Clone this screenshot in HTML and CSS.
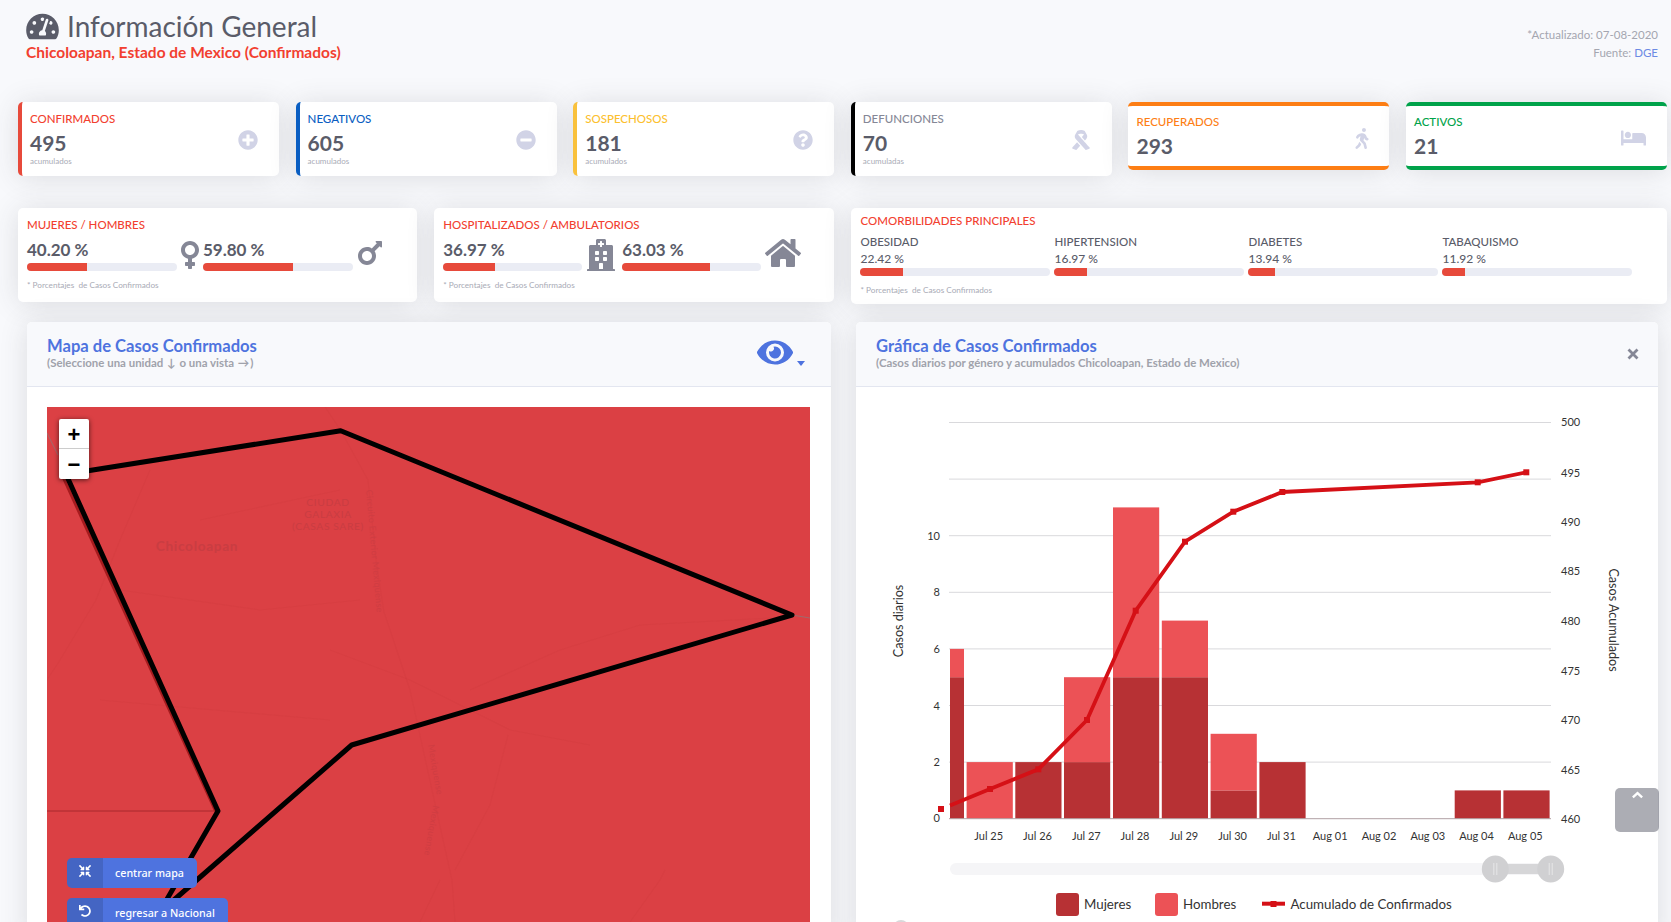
FILE: index.html
```html
<!DOCTYPE html>
<html lang="es">
<head>
<meta charset="utf-8">
<title>Información General</title>
<link rel="stylesheet" href="styles.css">
</head>
<body>
<div class="page">
  <header class="top">
    <div>
      <h1 class="title"><svg class="title-icon" viewBox="0 0 576 512"><path d="M288 32C128.94 32 0 160.94 0 320c0 52.8 14.25 102.26 39.06 144.8 5.61 9.62 16.3 15.2 27.44 15.2h443c11.14 0 21.83-5.58 27.44-15.2C561.75 422.26 576 372.8 576 320c0-159.06-128.94-288-288-288zm0 64c14.71 0 26.58 10.13 30.32 23.65-1.11 2.26-2.64 4.23-3.45 6.67l-9.22 27.67c-5.13 3.49-10.97 6.01-17.64 6.01-17.67 0-32-14.33-32-32S270.33 96 288 96zM96 384c-17.67 0-32-14.33-32-32s14.33-32 32-32 32 14.33 32 32-14.33 32-32 32zm48-160c-17.67 0-32-14.33-32-32s14.33-32 32-32 32 14.33 32 32-14.33 32-32 32zm246.77-72.41l-61.33 184C343.13 347.33 352 364.54 352 384c0 11.72-3.38 22.55-8.88 32H232.88c-5.5-9.45-8.88-20.28-8.88-32 0-33.94 26.5-61.43 59.9-63.59l61.34-184.01c4.17-12.56 17.73-19.45 30.36-15.17 12.57 4.19 19.35 17.79 15.17 30.36zm14.66 57.2l15.52-46.55c3.47-1.29 7.13-2.23 11.05-2.23 17.67 0 32 14.33 32 32s-14.33 32-32 32c-11.38-.01-20.89-6.28-26.57-15.22zM480 384c-17.67 0-32-14.33-32-32s14.33-32 32-32 32 14.33 32 32-14.33 32-32 32z"/></svg>Información General</h1>
      <div class="subtitle">Chicoloapan, Estado de Mexico (Confirmados)</div>
    </div>
    <div class="updated">
      <div>*Actualizado: 07-08-2020</div>
      <div>Fuente: <a class="source">DGE</a></div>
    </div>
  </header>

  <section class="kpis">
    <div class="kpi side c-red">
      <div class="kpi-text"><div class="kpi-label">CONFIRMADOS</div><div class="kpi-num">495</div><div class="kpi-note">acumulados</div></div>
      <svg class="kpi-icon" viewBox="0 0 512 512"><path d="M256 8C119 8 8 119 8 256s111 248 248 248 248-111 248-248S393 8 256 8zm144 276c0 6.6-5.4 12-12 12h-92v92c0 6.6-5.4 12-12 12h-56c-6.6 0-12-5.4-12-12v-92h-92c-6.6 0-12-5.4-12-12v-56c0-6.6 5.4-12 12-12h92v-92c0-6.6 5.4-12 12-12h56c6.6 0 12 5.4 12 12v92h92c6.6 0 12 5.4 12 12v56z"/></svg>
    </div>
    <div class="kpi side c-blue">
      <div class="kpi-text"><div class="kpi-label">NEGATIVOS</div><div class="kpi-num">605</div><div class="kpi-note">acumulados</div></div>
      <svg class="kpi-icon" viewBox="0 0 512 512"><path d="M256 8C119 8 8 119 8 256s111 248 248 248 248-111 248-248S393 8 256 8zM124 296c-6.6 0-12-5.4-12-12v-56c0-6.6 5.4-12 12-12h264c6.6 0 12 5.4 12 12v56c0 6.6-5.4 12-12 12H124z"/></svg>
    </div>
    <div class="kpi side c-yellow">
      <div class="kpi-text"><div class="kpi-label">SOSPECHOSOS</div><div class="kpi-num">181</div><div class="kpi-note">acumulados</div></div>
      <svg class="kpi-icon" viewBox="0 0 512 512"><path d="M504 256c0 136.997-111.043 248-248 248S8 392.997 8 256C8 119.083 119.043 8 256 8s248 111.083 248 248zM262.655 90c-54.497 0-89.255 22.957-116.549 63.758-3.536 5.286-2.353 12.415 2.715 16.258l34.699 26.31c5.205 3.947 12.621 3.008 16.665-2.122 17.864-22.658 30.113-35.797 57.303-35.797 20.429 0 45.698 13.148 45.698 32.958 0 14.976-12.363 22.667-32.534 33.976C247.128 238.528 216 254.941 216 296v4c0 6.627 5.373 12 12 12h56c6.627 0 12-5.373 12-12v-1.333c0-28.462 83.186-29.647 83.186-106.667 0-58.002-60.165-102-116.531-102zM256 338c-25.365 0-46 20.635-46 46 0 25.364 20.635 46 46 46s46-20.636 46-46c0-25.365-20.635-46-46-46z"/></svg>
    </div>
    <div class="kpi side c-black">
      <div class="kpi-text"><div class="kpi-label">DEFUNCIONES</div><div class="kpi-num">70</div><div class="kpi-note">acumuladas</div></div>
      <svg class="kpi-icon" viewBox="0 0 448 512"><path d="M6.1 444.3c-9.6 10.8-7.5 27.6 4.5 35.7l68.8 27.9c9.9 6.7 23.3 5 31.3-3.8l91.8-101.9-79.2-87.9-117.2 130zm435.8 0s-292-324.6-295.4-330.1c15.4-8.4 40.2-17.9 77.5-17.9s62.1 9.5 77.5 17.9c-3.3 5.6-56 64.6-56 64.6l79.1 87.7 34.2-38c28.7-31.9 33.3-78.6 11.4-115.5l-43.7-73.5c-4.3-7.2-9.9-13.3-16.8-18-40.7-27.6-127.4-29.7-171.4 0-6.9 4.7-12.5 10.8-16.8 18l-43.6 73.2c-1.5 2.5-37.1 62.2 11.5 116L337.5 504c8 8.9 21.4 10.5 31.3 3.8l68.8-27.9c11.9-8 14-24.8 4.3-35.6z"/></svg>
    </div>
    <div class="kpi band c-orange">
      <div class="kpi-text"><div class="kpi-label">RECUPERADOS</div><div class="kpi-num">293</div></div>
      <svg class="kpi-icon walk" viewBox="0 0 320 512"><path d="M208 96c26.5 0 48-21.5 48-48S234.5 0 208 0s-48 21.5-48 48 21.5 48 48 48zm94.5 149.1l-23.3-11.8-9.7-29.4c-14.7-44.6-55.7-75.8-102.2-75.9-36-.1-55.9 10.1-93.3 25.2-21.6 8.7-39.3 25.2-49.7 46.2L17.6 213c-7.8 15.8-1.5 35 14.2 42.9 15.6 7.9 34.6 1.5 42.5-14.3L81 228c3.5-7 9.3-12.5 16.5-15.4l26.8-10.8-15.2 60.7c-5.2 20.8.4 42.9 14.9 58.8l59.9 65.4c7.2 7.9 12.3 17.4 14.9 27.7l18.3 73.3c4.3 17.1 21.7 27.6 38.8 23.3 17.1-4.3 27.6-21.7 23.3-38.8l-22.2-89c-2.6-10.3-7.7-19.9-14.9-27.7l-45.5-49.7 17.2-68.7 5.5 16.5c5.3 16.1 16.7 29.4 31.7 37l23.3 11.8c15.6 7.9 34.6 1.5 42.5-14.3 7.7-15.7 1.4-35.1-14.3-43zM73.6 385.8c-3.2 8.1-8 15.4-14.2 21.5l-50 50.1c-12.5 12.5-12.5 32.8 0 45.3s32.7 12.5 45.2 0l59.4-59.4c6.1-6.1 10.9-13.4 14.2-21.5l13.5-33.8c-55.3-60.3-38.7-41.8-47.4-53.7l-20.7 51.5z"/></svg>
    </div>
    <div class="kpi band c-green">
      <div class="kpi-text"><div class="kpi-label">ACTIVOS</div><div class="kpi-num">21</div></div>
      <svg class="kpi-icon bed" viewBox="0 0 640 512"><path d="M176 256c44.11 0 80-35.89 80-80s-35.89-80-80-80-80 35.89-80 80 35.89 80 80 80zm352-128H304c-8.84 0-16 7.16-16 16v144H64V80c0-8.84-7.16-16-16-16H16C7.16 64 0 71.16 0 80v352c0 8.84 7.16 16 16 16h32c8.84 0 16-7.16 16-16v-48h512v48c0 8.84 7.16 16 16 16h32c8.84 0 16-7.16 16-16V240c0-61.86-50.14-112-112-112z"/></svg>
    </div>
  </section>

  <section class="stats">
    <div class="stat-card">
      <div class="stat-title">MUJERES / HOMBRES</div>
      <div class="pair">
        <div class="pair-item"><div class="pct">40.20 %</div><div class="bar"><div class="fill" style="width:40.2%"></div></div></div>
        <svg class="pair-icon venus" viewBox="0 0 288 512"><path d="M288 176c0-79.5-64.5-144-144-144S0 96.5 0 176c0 68.5 47.9 125.9 112 140.4V368H76c-6.6 0-12 5.4-12 12v40c0 6.6 5.4 12 12 12h36v36c0 6.6 5.4 12 12 12h40c6.6 0 12-5.4 12-12v-36h36c6.6 0 12-5.4 12-12v-40c0-6.6-5.4-12-12-12h-36v-51.6c64.1-14.5 112-71.9 112-140.4zm-224 0c0-44.1 35.9-80 80-80s80 35.9 80 80-35.9 80-80 80-80-35.9-80-80z"/></svg>
        <div class="pair-item"><div class="pct">59.80 %</div><div class="bar"><div class="fill" style="width:59.8%"></div></div></div>
        <svg class="pair-icon mars" viewBox="0 0 384 512"><path d="M372 64h-79c-10.7 0-16 12.9-8.5 20.5l16.9 16.9-80.7 80.7c-22.2-14-48.5-22.1-76.7-22.1C64.5 160 0 224.5 0 304s64.5 144 144 144 144-64.5 144-144c0-28.2-8.1-54.5-22.1-76.7l80.7-80.7 16.9 16.9c7.6 7.6 20.5 2.2 20.5-8.5V76c0-6.6-5.4-12-12-12zM144 384c-44.1 0-80-35.9-80-80s35.9-80 80-80 80 35.9 80 80-35.9 80-80 80z"/></svg>
      </div>
      <div class="foot">* Porcentajes&nbsp; de Casos Confirmados</div>
    </div>
    <div class="stat-card">
      <div class="stat-title">HOSPITALIZADOS / AMBULATORIOS</div>
      <div class="pair pair-b">
        <div class="pair-item"><div class="pct">36.97 %</div><div class="bar"><div class="fill" style="width:36.97%"></div></div></div>
        <svg class="pair-icon hosp" viewBox="0 0 448 512"><path d="M448 492v20H0v-20c0-6.627 5.373-12 12-12h20V120c0-13.255 10.745-24 24-24h88V24c0-13.255 10.745-24 24-24h112c13.255 0 24 10.745 24 24v72h88c13.255 0 24 10.745 24 24v360h20c6.627 0 12 5.373 12 12zM308 192h-40c-6.627 0-12 5.373-12 12v40c0 6.627 5.373 12 12 12h40c6.627 0 12-5.373 12-12v-40c0-6.627-5.373-12-12-12zm-168 64h40c6.627 0 12-5.373 12-12v-40c0-6.627-5.373-12-12-12h-40c-6.627 0-12 5.373-12 12v40c0 6.627 5.373 12 12 12zm104 128h-40c-6.627 0-12 5.373-12 12v84h64v-84c0-6.627-5.373-12-12-12zm64-96h-40c-6.627 0-12 5.373-12 12v40c0 6.627 5.373 12 12 12h40c6.627 0 12-5.373 12-12v-40c0-6.627-5.373-12-12-12zm-116 12c0-6.627-5.373-12-12-12h-40c-6.627 0-12 5.373-12 12v40c0 6.627 5.373 12 12 12h40c6.627 0 12-5.373 12-12v-40zM182 96h26v26a6 6 0 0 0 6 6h20a6 6 0 0 0 6-6V96h26a6 6 0 0 0 6-6V70a6 6 0 0 0-6-6h-26V38a6 6 0 0 0-6-6h-20a6 6 0 0 0-6 6v26h-26a6 6 0 0 0-6 6v20a6 6 0 0 0 6 6z"/></svg>
        <div class="pair-item"><div class="pct">63.03 %</div><div class="bar"><div class="fill" style="width:63.03%"></div></div></div>
        <svg class="pair-icon house" viewBox="0 0 576 512"><path d="M280.37 148.26L96 300.11V464a16 16 0 0 0 16 16l112.06-.29a16 16 0 0 0 15.92-16V368a16 16 0 0 1 16-16h64a16 16 0 0 1 16 16v95.64a16 16 0 0 0 16 16.05L464 480a16 16 0 0 0 16-16V300L295.67 148.26a12.19 12.19 0 0 0-15.3 0zM571.6 251.47L488 182.56V44.05a12 12 0 0 0-12-12h-56a12 12 0 0 0-12 12v72.61L318.47 43a48 48 0 0 0-61 0L4.34 251.47a12 12 0 0 0-1.6 16.9l25.5 31A12 12 0 0 0 45.15 301l235.22-193.74a12.19 12.19 0 0 1 15.3 0L530.9 301a12 12 0 0 0 16.9-1.6l25.5-31a12 12 0 0 0-1.7-16.93z"/></svg>
      </div>
      <div class="foot">* Porcentajes&nbsp; de Casos Confirmados</div>
    </div>
    <div class="stat-card como">
      <div class="stat-title">COMORBILIDADES PRINCIPALES</div>
      <div class="como-grid">
        <div><div class="como-name">OBESIDAD</div><div class="como-val">22.42 %</div><div class="bar"><div class="fill" style="width:22.42%"></div></div></div>
        <div><div class="como-name">HIPERTENSION</div><div class="como-val">16.97 %</div><div class="bar"><div class="fill" style="width:16.97%"></div></div></div>
        <div><div class="como-name">DIABETES</div><div class="como-val">13.94 %</div><div class="bar"><div class="fill" style="width:13.94%"></div></div></div>
        <div><div class="como-name">TABAQUISMO</div><div class="como-val">11.92 %</div><div class="bar"><div class="fill" style="width:11.92%"></div></div></div>
      </div>
      <div class="foot">* Porcentajes&nbsp; de Casos Confirmados</div>
    </div>
  </section>

  <section class="panels">
    <article class="panel">
      <div class="panel-head">
        <div>
          <div class="panel-title">Mapa de Casos Confirmados</div>
          <div class="panel-sub">(Seleccione una unidad <span class="arrow">↓</span> o una vista <span class="arrow">→</span>)</div>
        </div>
        <div class="eye-wrap">
          <svg class="eye" viewBox="0 0 576 512"><path d="M572.52 241.4C518.29 135.59 410.93 64 288 64S57.68 135.64 3.48 241.41a32.35 32.35 0 0 0 0 29.19C57.71 376.41 165.07 448 288 448s230.32-71.64 284.52-177.41a32.35 32.35 0 0 0 0-29.19zM288 400a144 144 0 1 1 144-144 143.93 143.93 0 0 1-144 144zm0-240a95.31 95.31 0 0 0-25.31 3.79 47.85 47.85 0 0 1-66.9 66.9A95.78 95.78 0 1 0 288 160z"/></svg>
          <span class="caret"></span>
        </div>
      </div>
      <div class="panel-body">
        <div class="map">
          <svg class="map-svg" viewBox="47 407 763 515">
            <rect x="47" y="407" width="763" height="515" fill="#db4044"/>
            <g class="roads">
              <path d="M325 407 L341 431 L368 480 L376 560 L384 612 L410 690 L432 790 L452 880 L455 922"/>
              <path d="M150 470 L120 540 L96 600 L60 660 L47 680"/>
              <path d="M330 650 L410 680 L510 730 L590 745"/>
              <path d="M508 735 L490 805 L455 870"/>
              <path d="M440 880 L420 922 M630 922 L660 880 L665 870"/>
              <path d="M470 690 L560 650 L640 625 L790 617"/>
              <path d="M120 590 L260 610 L360 600 M100 700 L330 720 M200 520 L340 490"/>
            </g>
            <text class="map-town" x="197" y="551" text-anchor="middle">Chicoloapan</text>
            <text class="map-col" x="328" y="505.5" text-anchor="middle">CIUDAD</text>
            <text class="map-col" x="328" y="518" text-anchor="middle">GALAXIA</text>
            <text class="map-col" x="328" y="530" text-anchor="middle">(CASAS SARE)</text>
            <text class="map-road" transform="translate(366 490) rotate(85)">Circuito Exterior Mexiquense</text>
            <text class="map-road" transform="translate(428 745) rotate(80)">Mexiquense</text>
            <text class="map-road" transform="translate(433 805) rotate(100)">Mexiquense</text>
            <path d="M47 811 L218 811" class="thin-line"/>
            <path d="M47 433 L58 455" class="faint-line"/>
            <path d="M792 615 L810 618" class="faint-line"/>
            <path d="M63.5 478 L215.5 811" class="shadow-line"/>
            <path d="M66 474.3 L340.7 430.7 L792 615 L351.7 745 L159 913 L218 811 Z" class="outline"/>
          </svg>
          <div class="zoom">
            <div class="zoom-btn zoom-top">+</div>
            <div class="zoom-btn">−</div>
          </div>
          <div class="map-actions">
            <div class="map-btn">
              <span class="map-btn-ico"><svg viewBox="0 0 512 512"><path d="M200 288H88c-21.4 0-32.1 25.8-17 41l32.9 31-99.2 99.3c-6.2 6.2-6.2 16.4 0 22.6l25.4 25.4c6.2 6.2 16.4 6.2 22.6 0L152 408l31.1 33c15.1 15.1 40.9 4.4 40.9-17V312c0-13.3-10.7-24-24-24zm112-64h112c21.4 0 32.1-25.9 17-41l-33-31 99.3-99.3c6.2-6.2 6.2-16.4 0-22.6L481.9 4.7c-6.2-6.2-16.4-6.2-22.6 0L360 104l-31.1-33C313.8 55.9 288 66.6 288 88v112c0 13.3 10.7 24 24 24zm96 136l33-31.1c15.1-15.1 4.4-40.9-17-40.9H312c-13.3 0-24 10.7-24 24v112c0 21.4 25.9 32.1 41 17l31-32.9 99.3 99.3c6.2 6.2 16.4 6.2 22.6 0l25.4-25.4c6.2-6.2 6.2-16.4 0-22.6L408 360zM183 71.1L152 104 52.7 4.7c-6.2-6.2-16.4-6.2-22.6 0L4.7 30.1c-6.2 6.2-6.2 16.4 0 22.6L104 152l-33 31.1C55.9 198.2 66.6 224 88 224h112c13.3 0 24-10.7 24-24V88c0-21.3-25.9-32-41-16.9z"/></svg></span>
              <span class="map-btn-txt">centrar mapa</span>
            </div>
            <div class="map-btn">
              <span class="map-btn-ico"><svg viewBox="0 0 512 512"><path d="M212.333 224.333H12c-6.627 0-12-5.373-12-12V12C0 5.373 5.373 0 12 0h48c6.627 0 12 5.373 12 12v78.112C117.773 39.279 184.26 7.47 258.175 8.007c136.906.994 246.448 111.623 246.157 248.532C504.041 393.258 393.12 504 256.333 504c-64.089 0-122.496-24.313-166.51-64.215-5.099-4.622-5.334-12.554-.467-17.42l33.967-33.967c4.474-4.474 11.662-4.717 16.401-.525C170.76 415.336 211.58 432 256.333 432c97.268 0 176-78.716 176-176 0-97.267-78.716-176-176-176-58.496 0-110.28 28.476-142.274 72.333h98.274c6.627 0 12 5.373 12 12v48c0 6.627-5.373 12-12 12z"/></svg></span>
              <span class="map-btn-txt">regresar a Nacional</span>
            </div>
          </div>
        </div>
      </div>
    </article>

    <article class="panel">
      <div class="panel-head">
        <div>
          <div class="panel-title">Gráfica de Casos Confirmados</div>
          <div class="panel-sub">(Casos diarios por género y acumulados Chicoloapan, Estado de Mexico)</div>
        </div>
        <svg class="close" viewBox="0 0 12 12"><path d="M1.5 1.5 L10.5 10.5 M10.5 1.5 L1.5 10.5"/></svg>
      </div>
      <svg class="chart" viewBox="856 387 802 535">
        <g class="grid">
          <path d="M949 422.5H1551M949 479.1H1551M949 535.7H1551M949 592.3H1551M949 648.9H1551M949 705.5H1551M949 762.1H1551"/>
        </g>
        <g class="bars-m">
          <rect x="950" y="677.2" width="14" height="141.5"/>
          <rect x="1015.3" y="762.1" width="46.2" height="56.6"/>
          <rect x="1064" y="762.1" width="46.2" height="56.6"/>
          <rect x="1113" y="677.2" width="46.2" height="141.5"/>
          <rect x="1161.8" y="677.2" width="46.2" height="141.5"/>
          <rect x="1210.6" y="790.4" width="46.2" height="28.3"/>
          <rect x="1259.4" y="762.1" width="46.2" height="56.6"/>
          <rect x="1454.7" y="790.4" width="46.2" height="28.3"/>
          <rect x="1503.4" y="790.4" width="46.2" height="28.3"/>
        </g>
        <g class="bars-h">
          <rect x="950" y="648.9" width="14" height="28.3"/>
          <rect x="966.6" y="762.1" width="46.2" height="56.6"/>
          <rect x="1064" y="677.2" width="46.2" height="84.9"/>
          <rect x="1113" y="507.4" width="46.2" height="169.8"/>
          <rect x="1161.8" y="620.6" width="46.2" height="56.6"/>
          <rect x="1210.6" y="733.8" width="46.2" height="56.6"/>
        </g>
        <path class="baseline" d="M949 818.7H1551"/>
        <path class="line" d="M950 805.4L990 789L1038.3 769.3L1087 720L1135.7 610.7L1185 541.7L1233.3 511.7L1282.3 492L1477.7 482.3L1526.3 472.3"/>
        <g class="marks">
          <rect x="938" y="806" width="6" height="6"/>
          <rect x="987" y="786" width="6" height="6"/>
          <rect x="1035.3" y="766.3" width="6" height="6"/>
          <rect x="1084" y="717" width="6" height="6"/>
          <rect x="1132.7" y="607.7" width="6" height="6"/>
          <rect x="1182" y="538.7" width="6" height="6"/>
          <rect x="1230.3" y="508.7" width="6" height="6"/>
          <rect x="1279.3" y="489" width="6" height="6"/>
          <rect x="1474.7" y="479.3" width="6" height="6"/>
          <rect x="1523.3" y="469.3" width="6" height="6"/>
        </g>
        <g class="tick tick-l">
          <text x="940" y="822">0</text><text x="940" y="766">2</text><text x="940" y="709.5">4</text><text x="940" y="653">6</text><text x="940" y="596">8</text><text x="940" y="539.5">10</text>
        </g>
        <g class="tick tick-r">
          <text x="1561" y="426">500</text><text x="1561" y="476.5">495</text><text x="1561" y="525.5">490</text><text x="1561" y="575">485</text><text x="1561" y="624.5">480</text><text x="1561" y="674.5">475</text><text x="1561" y="723.5">470</text><text x="1561" y="773.5">465</text><text x="1561" y="822.5">460</text>
        </g>
        <g class="tick tick-x">
          <text x="988.7" y="839.5">Jul 25</text><text x="1037.5" y="839.5">Jul 26</text><text x="1086.3" y="839.5">Jul 27</text><text x="1135" y="839.5">Jul 28</text><text x="1183.8" y="839.5">Jul 29</text><text x="1232.6" y="839.5">Jul 30</text><text x="1281.4" y="839.5">Jul 31</text><text x="1330.2" y="839.5">Aug 01</text><text x="1379" y="839.5">Aug 02</text><text x="1427.8" y="839.5">Aug 03</text><text x="1476.5" y="839.5">Aug 04</text><text x="1525.3" y="839.5">Aug 05</text>
        </g>
        <text class="axis-title" transform="translate(903 621) rotate(-90)">Casos diarios</text>
        <text class="axis-title" transform="translate(1609 620) rotate(90)">Casos Acumulados</text>
        <rect class="slider-track" x="950" y="863" width="600" height="12" rx="6"/>
        <rect class="slider-range" x="1495" y="864" width="56" height="10"/>
        <circle class="slider-h" cx="1495.3" cy="869" r="13.5"/>
        <circle class="slider-h" cx="1550.7" cy="869" r="13.5"/>
        <path class="slider-grip" d="M1493.8 863V875M1496.8 863V875M1549.2 863V875M1552.2 863V875"/>
        <rect class="lg-m" x="1056" y="893" width="23" height="23" rx="3"/>
        <text class="lg-text" x="1084" y="909">Mujeres</text>
        <rect class="lg-h" x="1155" y="893" width="23" height="23" rx="3"/>
        <text class="lg-text" x="1183" y="909">Hombres</text>
        <path class="lg-line" d="M1262 903.7H1285"/>
        <rect class="lg-mark" x="1270.5" y="901" width="6" height="6"/>
        <text class="lg-text" x="1290.5" y="909">Acumulado de Confirmados</text>
        <circle class="peek" cx="901" cy="928" r="8"/>
      </svg>
    </article>
  </section>

  <div class="to-top"><svg viewBox="0 0 14 8"><path d="M2 6.5 L7 2 L12 6.5"/></svg></div>
</div>
</body>
</html>
```

FILE: styles.css
```css
* { box-sizing: border-box; }
html, body { margin: 0; height: 922px; overflow: hidden; }
body { background: #f8f9fc; font-family: "Lato", "Noto Sans", sans-serif; color: #5a5c69; }
.page { position: relative; width: 1671px; height: 922px; overflow: hidden; }

.top { height: 102px; display: flex; justify-content: space-between; padding: 10px 13px 0 26px; }
.title { margin: 0; display: flex; align-items: center; gap: 8px; font-size: 28px; font-weight: 400; line-height: 32px; color: #5a5c69; }
.title-icon { width: 33px; height: 29px; fill: #5a5c69; }
.subtitle { margin-top: 1px; font-size: 15.5px; font-weight: 700; line-height: 18px; color: #f23f30; }
.updated { margin-top: 16px; text-align: right; font-size: 11.5px; line-height: 18px; color: #a4a6b0; }
.source { color: #6c8ae4; }

.kpis { display: grid; grid-template-columns: repeat(6, 1fr); column-gap: 16.7px; margin: 0 4px 0 18px; height: 74px; align-items: start; }
.kpi { position: relative; display: flex; justify-content: space-between; align-items: center; background: #fff; border-radius: 5px; box-shadow: 0 2px 28px rgba(58,59,69,.15); border: 0 solid var(--b); }
.kpi.side { height: 74px; border-left-width: 4px; padding: 0 21px 0 8px; }
.kpi.band { height: 68px; border-top-width: 4px; border-bottom-width: 4px; padding: 2px 21px 0 8px; }
.c-red { --b: #e74a3b; --c: #f23f30; }
.c-blue { --b: #0a5ec2; --c: #0a5ec2; }
.c-yellow { --b: #f9c13c; --c: #fcc02e; }
.c-black { --b: #000; --c: #858796; }
.c-orange { --b: #fd7e14; --c: #fd7e14; }
.c-green { --b: #00a24a; --c: #00a24a; }
.kpi-label { font-size: 11.5px; font-weight: 500; line-height: 14px; color: var(--c); }
.kpi-num { margin-top: 4px; font-size: 21px; font-weight: 700; line-height: 26px; color: #5a5c69; }
.kpi-note { font-size: 8px; line-height: 10px; color: #a9abb6; }
.kpi-icon { width: 20px; height: 20px; fill: #d1d3e6; flex: none; }
.kpi.side .kpi-icon { margin-top: 1px; }
.kpi.band .kpi-icon { margin-top: 2px; }
.kpi-icon.walk { width: 14px; height: 21px; margin-right: -1px; }
.kpi-icon.bed { width: 25px; height: 20px; }

.stats { display: grid; grid-template-columns: 399fr 400fr 815fr; column-gap: 17px; margin: 32px 4px 0 18px; height: 96px; align-items: start; }
.stat-card { height: 94px; padding: 10px 9px 0; background: #fff; border-radius: 5px; box-shadow: 0 2px 28px rgba(58,59,69,.15); }
.stat-title { font-size: 11.5px; font-weight: 500; line-height: 14px; color: #f23f30; }
.pair { display: flex; align-items: flex-end; margin-top: 2.5px; height: 36px; }
.pair-item { width: 150px; flex: none; }
.pair-b .pair-item { width: 139px; }
.pct { font-size: 17px; font-weight: 700; line-height: 20px; color: #5a5c69; }
.bar { height: 8px; margin-top: 3px; background: #eaecf4; border-radius: 5px; overflow: hidden; }
.fill { height: 100%; background: #e74a3b; }
.pair-icon { flex: none; fill: #858796; }
.venus { width: 18px; height: 32px; margin: 0 4px 0 4px; }
.mars { width: 26px; height: 32px; margin: 0 0 2px 4px; }
.hosp { width: 28px; height: 32px; margin: 0 7px 0 5px; }
.house { width: 36px; height: 32px; margin: 0 0 2px 4px; }
.foot { margin-top: 9px; font-size: 8.2px; line-height: 10px; color: #a9abb6; }
.como { height: 96px; padding-top: 6px; }
.como-grid { display: grid; grid-template-columns: repeat(4, 190px); column-gap: 4px; margin-top: 6px; }
.como-name { font-size: 11.5px; font-weight: 500; line-height: 16px; color: #5a5c69; }
.como-val { margin-top: 1px; font-size: 12px; font-weight: 500; line-height: 16px; color: #5a5c69; }
.como-grid .bar { margin-top: 1px; }
.como .foot { margin-top: 9px; }

.panels { display: grid; grid-template-columns: 803.5px 802px; column-gap: 25.5px; margin: 18px 0 0 27px; }
.panel { background: #fff; border-radius: 5px 5px 0 0; box-shadow: 0 2px 28px rgba(58,59,69,.15); height: 620px; overflow: hidden; }
.panel-head { height: 65px; display: flex; justify-content: space-between; align-items: center; padding: 0 20px 3px; background: #f8f9fc; border-bottom: 1px solid #e3e6f0; }
.panel-title { font-size: 16.6px; font-weight: 700; line-height: 20px; color: #4e73df; }
.panel-sub { font-size: 11.45px; font-weight: 700; line-height: 13px; color: #a0a2ab; }
.arrow { display: inline-block; padding: 0 1px; font-weight: 700; }
.eye-wrap { display: flex; align-items: flex-end; gap: 4px; margin-right: 6px; }
.eye { width: 36px; height: 33px; fill: #4e73df; }
.caret { width: 0; height: 0; margin-bottom: 3px; border-left: 4.5px solid transparent; border-right: 4.5px solid transparent; border-top: 5px solid #4e73df; }
.close { width: 12px; height: 12px; margin: 3px -1px 0 0; }
.close path { stroke: #858796; stroke-width: 2.8; fill: none; }
.panel-body { padding: 20px 20px 0; }
.map { position: relative; width: 763px; height: 560px; background: #db4044; }
.map-svg { display: block; width: 763px; height: 515px; }
.roads path { fill: none; stroke: #a0252b; stroke-opacity: .05; stroke-width: 1.2; }
.map-town { font-size: 13.6px; font-weight: 700; fill: #c93d42; letter-spacing: .7px; }
.map-col { font-size: 10.3px; fill: #c93d42; letter-spacing: .6px; }
.map-road { font-size: 9px; fill: #cf3d42; letter-spacing: .3px; }
.thin-line { stroke: #a8282d; stroke-width: 1; fill: none; }
.faint-line { stroke: #a06a6c; stroke-width: 1; fill: none; }
.shadow-line { stroke: #a61b1e; stroke-width: 3; fill: none; }
.outline { stroke: #000; stroke-width: 5; fill: none; stroke-linejoin: round; }
.zoom { position: absolute; left: 12px; top: 12px; width: 30px; background: #fff; border-radius: 2px; box-shadow: 0 1px 5px rgba(0,0,0,.65); }
.zoom-btn { height: 30px; padding-top: 2px; display: flex; align-items: center; justify-content: center; font-family: "Liberation Sans", sans-serif; font-size: 22px; font-weight: 700; color: #000; }
.zoom-top { border-bottom: 1px solid #ccc; }
.map-actions { position: absolute; left: 20px; top: 451px; display: flex; flex-direction: column; align-items: flex-start; gap: 10px; }
.map-btn { display: flex; height: 30px; background: #4e73df; border-radius: 5px; overflow: hidden; color: #fff; }
.map-btn-ico { width: 36px; display: flex; justify-content: center; background: rgba(0,0,0,.12); padding-top: 7px; }
.map-btn-ico svg { width: 12px; height: 12px; fill: #fff; }
.map-btn-txt { padding: 0 13px 0 12px; font-family: "Noto Sans", sans-serif; font-size: 10.7px; line-height: 30px; font-weight: 500; }

.chart { display: block; width: 802px; height: 535px; }
.grid path { stroke: #d9d9dc; stroke-width: 1; fill: none; }
.bars-m rect { fill: #b73134; }
.bars-h rect { fill: #ec5256; }
.baseline { stroke: #b0a0a4; stroke-width: 1; fill: none; }
.line { stroke: #d51016; stroke-width: 3.8; fill: none; }
.marks rect { fill: #d51016; }
.tick text { font-size: 11px; fill: #333; }
.tick-l text { text-anchor: end; }
.tick-x text { text-anchor: middle; }
.axis-title { font-size: 12.6px; fill: #333; text-anchor: middle; }
.slider-track { fill: #f5f5f7; }
.slider-range { fill: #d6d6d8; }
.slider-h { fill: #d0d0d2; }
.slider-grip { stroke: #e6e6e7; stroke-width: 1; fill: none; }
.lg-m { fill: #b73134; }
.lg-h { fill: #ec5256; }
.lg-line { stroke: #d51016; stroke-width: 4; fill: none; }
.lg-mark { fill: #d51016; }
.lg-text { font-size: 13.3px; fill: #333; }
.peek { fill: #d8d8da; }

.to-top { position: absolute; left: 1615px; top: 788px; width: 44px; height: 44px; padding-top: 3px; display: flex; justify-content: center; align-items: flex-start; background: rgba(90,92,105,.5); border-radius: 5px; }
.to-top svg { width: 13px; height: 8px; }
.to-top path { stroke: #fff; stroke-width: 2.6; fill: none; }
```
